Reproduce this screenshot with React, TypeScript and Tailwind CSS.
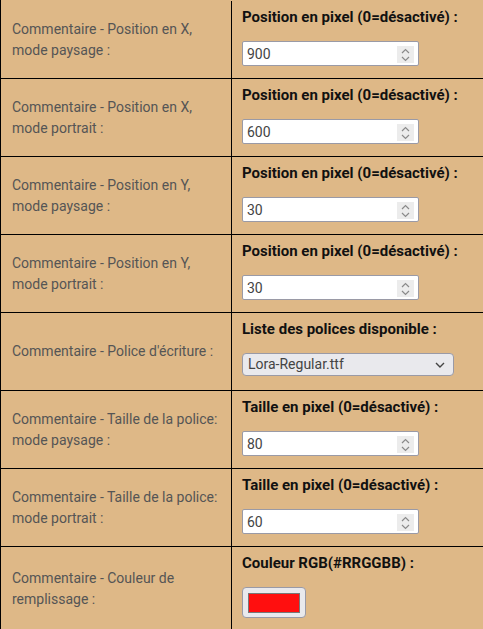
import React from 'react';

type Field =
  | { kind: 'number'; label: string; title: string; value: string }
  | { kind: 'select'; label: string; title: string; value: string }
  | { kind: 'color'; label: string; title: string; value: string };

const fields: Field[] = [
  { kind: 'number', label: 'Commentaire - Position en X, mode paysage :', title: 'Position en pixel (0=désactivé) :', value: '900' },
  { kind: 'number', label: 'Commentaire - Position en X, mode portrait :', title: 'Position en pixel (0=désactivé) :', value: '600' },
  { kind: 'number', label: 'Commentaire - Position en Y, mode paysage :', title: 'Position en pixel (0=désactivé) :', value: '30' },
  { kind: 'number', label: 'Commentaire - Position en Y, mode portrait :', title: 'Position en pixel (0=désactivé) :', value: '30' },
  { kind: 'select', label: "Commentaire - Police d'écriture :", title: 'Liste des polices disponible :', value: 'Lora-Regular.ttf' },
  { kind: 'number', label: 'Commentaire - Taille de la police: mode paysage :', title: 'Taille en pixel (0=désactivé) :', value: '80' },
  { kind: 'number', label: 'Commentaire - Taille de la police: mode portrait :', title: 'Taille en pixel (0=désactivé) :', value: '60' },
  { kind: 'color', label: 'Commentaire - Couleur de remplissage :', title: 'Couleur RGB(#RRGGBB) :', value: '#ff0000' },
];

const Spinner = () => (
  <div className="absolute right-[4px] top-[4px] flex h-[17px] w-[17px] flex-col items-center justify-center bg-[#ececec]">
    <svg width="9" height="14" viewBox="0 0 9 14" fill="none" stroke="#8a8a8a" strokeWidth="1.2">
      <path d="M1 5 L4.5 1.5 L8 5" />
      <path d="M1 9 L4.5 12.5 L8 9" />
    </svg>
  </div>
);

const Control: React.FC<{ field: Field }> = ({ field }) => {
  if (field.kind === 'number') {
    return (
      <div className="relative h-[25px] w-[177px] rounded-[2px] border border-[#9a9aa6] bg-white">
        <input
          type="text"
          defaultValue={field.value}
          className="h-full w-full bg-transparent pl-[4px] text-[14px] text-[#444] outline-none"
        />
        <Spinner />
      </div>
    );
  }
  if (field.kind === 'select') {
    return (
      <div className="flex h-[23px] w-[212px] items-center justify-between rounded-[4px] border border-[#9a9aa6] bg-[#e9e9ed] pl-[5px] pr-[8px] text-[14px] text-[#444]">
        <span>{field.value}</span>
        <svg width="10" height="6" viewBox="0 0 10 6" fill="none" stroke="#444" strokeWidth="1.4">
          <path d="M1 1 L5 5 L9 1" />
        </svg>
      </div>
    );
  }
  return (
    <div className="flex h-[31px] w-[64px] items-center justify-center rounded-[4px] border border-[#9a9aa6] bg-[#e9e9ed]">
      <div className="h-[20px] w-[52px] border border-[#777] bg-[#ff0f0f]" />
    </div>
  );
};

export default function App() {
  return (
    <div className="h-screen w-full overflow-hidden bg-[#deb887] font-['Roboto',sans-serif]">
      <div className="w-[520px] border-l border-black pt-px">
        {fields.map((f, i) => (
          <div
            key={i}
            className={
              i === fields.length - 1
                ? 'grid h-[110px] grid-cols-[231px_1fr] border-b border-black'
                : 'grid h-[78px] grid-cols-[231px_1fr] border-b border-black'
            }
          >
            <div
              className={
                i === fields.length - 1
                  ? 'flex items-start border-r border-black pl-[11px] pr-[8px] pt-[21px] text-[14px] leading-[21px] text-[#555]'
                  : 'flex items-center border-r border-black pl-[11px] pr-[8px] text-[14px] leading-[21px] text-[#555]'
              }
            >
              {f.label}
            </div>
            <div className="flex flex-col gap-[14px] pl-[10px] pt-[6px]">
              <div className="text-[15px] font-bold leading-[20px] text-[#111]">{f.title}</div>
              <Control field={f} />
            </div>
          </div>
        ))}
      </div>
    </div>
  );
}
